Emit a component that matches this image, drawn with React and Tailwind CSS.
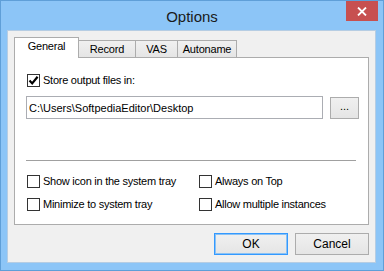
import { useState } from 'react';

const FONT = { fontFamily: "'Liberation Sans', Arial, sans-serif" };

function CheckBox({ checked, label, onToggle }) {
  return (
    <label className="flex items-center gap-[3px] cursor-default select-none" onClick={onToggle}>
      <span className="w-[13px] h-[13px] border border-[#333333] bg-white flex items-center justify-center shrink-0">
        {checked && (
          <svg width="11" height="11" viewBox="0 0 11 11">
            <path d="M1.5 5.5 L4.2 8.4 L9.6 1.8" fill="none" stroke="#000" strokeWidth="2.2" />
          </svg>
        )}
      </span>
      <span className="text-[11px] leading-[13px] tracking-[-0.25px] text-black">{label}</span>
    </label>
  );
}

export default function App() {
  const [tab, setTab] = useState('General');
  const [opts, setOpts] = useState({
    store: true,
    trayIcon: false,
    onTop: false,
    minimize: false,
    multi: false,
  });
  const toggle = key => setOpts(o => ({ ...o, [key]: !o[key] }));

  const tabs = [
    { name: 'General', w: 'w-[65px]' },
    { name: 'Record', w: 'w-[57px]' },
    { name: 'VAS', w: 'w-[42px]' },
    { name: 'Autoname', w: 'w-[59px]' },
  ];

  return (
    <div className="w-[384px] h-[271px] bg-[#8cc5f7] border border-[#5f9fd8] flex flex-col" style={FONT}>
      {/* Title bar */}
      <div className="h-[30px] flex">
        <div className="flex-1" />
        <div className="text-[15px] text-[#1a1a1a] pt-[5px]">Options</div>
        <div className="flex-1 flex justify-end">
          <button className="w-[32px] h-[20px] bg-[#c75050] mr-[5px] flex items-center justify-center">
            <svg width="10" height="9" viewBox="0 0 10 9">
              <path d="M1 0.5 L9 8.5 M9 0.5 L1 8.5" stroke="#fff" strokeWidth="1.8" />
            </svg>
          </button>
        </div>
      </div>

      {/* Client area */}
      <div className="flex-1 ml-[6px] mr-[7px] mb-[7px] bg-[#f0f0f0] border border-[#b6cde3] pt-[6px] pl-[6px] pr-[7px] pb-[7px] flex flex-col">
        {/* Tabs */}
        <div className="flex items-end h-[21px] -mb-px relative z-10">
          {tabs.map((t, i) => {
            const active = t.name === tab;
            return (
              <button
                key={t.name}
                onClick={() => setTab(t.name)}
                className={
                  active
                    ? `${t.w} h-[21px] bg-white border border-b-0 border-[#acacac] text-[11px] tracking-[-0.2px] text-black pb-[3px]`
                    : `${t.w} h-[18px] bg-gradient-to-b from-[#f0f0f0] to-[#e5e5e5] border-t border-r border-b border-[#acacac] text-[11px] tracking-[-0.2px] text-black ${i === 0 ? 'border-l' : ''}`
                }
              >
                {t.name}
              </button>
            );
          })}
        </div>

        {/* Panel */}
        <div className="w-[355px] h-[168px] bg-white border border-[#acacac] flex flex-col pl-[11px]">
          <div className="mt-[16px] pl-px">
            <CheckBox checked={opts.store} label="Store output files in:" onToggle={() => toggle('store')} />
          </div>

          <div className="mt-[9px] flex items-start gap-[7px]">
            <input
              className="w-[297px] h-[23px] border border-[#abadb3] bg-white px-[2px] text-[11px] text-black outline-none"
              style={FONT}
              defaultValue="C:\Users\SoftpediaEditor\Desktop"
            />
            <button className="w-[29px] h-[22px] mt-px border border-[#acacac] bg-gradient-to-b from-[#f0f0f0] to-[#e5e5e5] text-[11px] text-black leading-none pb-[4px]">
              ...
            </button>
          </div>

          <div className="mt-[41px] w-[330px] h-px bg-[#a0a0a0]" />

          <div className="mt-[14px] pl-px grid grid-cols-[172px_1fr] gap-y-[10px]">
            <CheckBox checked={opts.trayIcon} label="Show icon in the system tray" onToggle={() => toggle('trayIcon')} />
            <CheckBox checked={opts.onTop} label="Always on Top" onToggle={() => toggle('onTop')} />
            <CheckBox checked={opts.minimize} label="Minimize to system tray" onToggle={() => toggle('minimize')} />
            <CheckBox checked={opts.multi} label="Allow multiple instances" onToggle={() => toggle('multi')} />
          </div>
        </div>

        {/* Buttons */}
        <div className="mt-[8px] flex justify-end gap-[7px] -mr-px">
          <button className="w-[74px] h-[22px] border border-[#3399ff] bg-gradient-to-b from-[#f0f0f0] to-[#e5e5e5] text-[12px] text-black shadow-[inset_0_0_0_1px_#8ac2f5]">
            OK
          </button>
          <button className="w-[74px] h-[22px] border border-[#acacac] bg-gradient-to-b from-[#f0f0f0] to-[#e5e5e5] text-[12px] text-black">
            Cancel
          </button>
        </div>
      </div>
    </div>
  );
}
